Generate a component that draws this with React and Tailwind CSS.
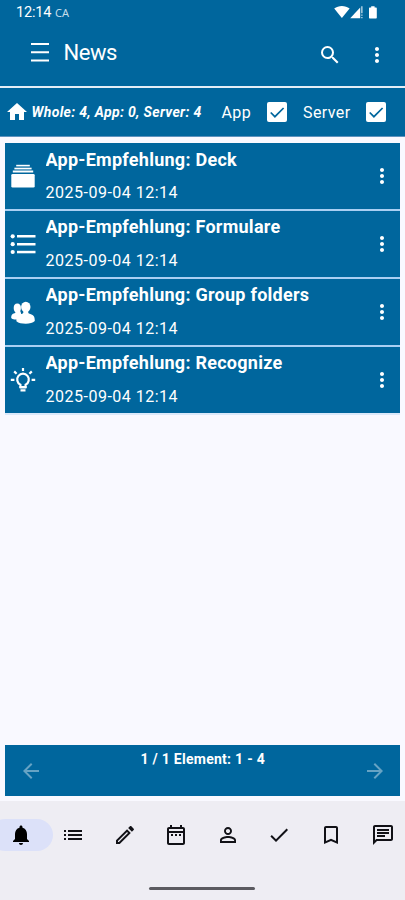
import React, { useState } from 'react';

const PATHS = {
  search: 'M15.5 14h-.79l-.28-.27A6.471 6.471 0 0 0 16 9.5 6.5 6.5 0 1 0 9.5 16c1.61 0 3.09-.59 4.23-1.57l.27.28v.79l5 4.99L20.49 19l-4.99-5zm-6 0C7.01 14 5 11.99 5 9.5S7.01 5 9.5 5 14 7.01 14 9.5 11.99 14 9.5 14z',
  more: 'M12 8c1.1 0 2-.9 2-2s-.9-2-2-2-2 .9-2 2 .9 2 2 2zm0 2c-1.1 0-2 .9-2 2s.9 2 2 2 2-.9 2-2-.9-2-2-2zm0 6c-1.1 0-2 .9-2 2s.9 2 2 2 2-.9 2-2-.9-2-2-2z',
  home: 'M10 20v-6h4v6h5v-8h3L12 3 2 12h3v8z',
  bell: 'M12 22c1.1 0 2-.9 2-2h-4c0 1.1.89 2 2 2zm6-6v-5c0-3.07-1.64-5.64-4.5-6.32V4c0-.83-.67-1.5-1.5-1.5s-1.5.67-1.5 1.5v.68C7.63 5.36 6 7.92 6 11v5l-2 2v1h16v-1l-2-2z',
  list: 'M3 13h2v-2H3v2zm0 4h2v-2H3v2zm0-8h2V7H3v2zm4 4h14v-2H7v2zm0 4h14v-2H7v2zM7 7v2h14V7H7z',
  edit: 'M14.06 9.02l.92.92L5.92 19H5v-.92l9.06-9.06M17.66 3c-.25 0-.51.1-.7.29l-1.83 1.83 3.75 3.75 1.83-1.83c.39-.39.39-1.02 0-1.41l-2.34-2.34c-.2-.2-.45-.29-.71-.29zm-3.6 3.19L3 17.25V21h3.75L17.81 9.94l-3.75-3.75z',
  calendar: 'M7 11h2v2H7v-2zm14-5v14c0 1.1-.9 2-2 2H5c-1.11 0-2-.9-2-2l.01-14c0-1.1.88-2 1.99-2h1V2h2v2h8V2h2v2h1c1.1 0 2 .9 2 2zM5 8h14V6H5v2zm14 12V10H5v10h14zm-4-7h2v-2h-2v2zm-4 0h2v-2h-2v2z',
  person: 'M12 5.9c1.16 0 2.1.94 2.1 2.1s-.94 2.1-2.1 2.1S9.9 9.16 9.9 8s.94-2.1 2.1-2.1m0 9c2.97 0 6.1 1.46 6.1 2.1v1.1H5.9V17c0-.64 3.13-2.1 6.1-2.1M12 4C9.79 4 8 5.79 8 8s1.79 4 4 4 4-1.79 4-4-1.79-4-4-4zm0 9c-2.67 0-8 1.34-8 4v3h16v-3c0-2.66-5.33-4-8-4z',
  check: 'M9 16.17L4.83 12l-1.42 1.41L9 19 21 7l-1.41-1.41z',
  bookmark: 'M17 3H7c-1.1 0-1.99.9-1.99 2L5 21l7-3 7 3V5c0-1.1-.9-2-2-2zm0 15l-5-2.18L7 18V5h10v13z',
  chat: 'M4 4h16v12H5.17L4 17.17V4m0-2c-1.1 0-1.99.9-1.99 2L2 22l4-4h14c1.1 0 2-.9 2-2V4c0-1.1-.9-2-2-2H4zm2 10h8v2H6v-2zm0-3h12v2H6V9zm0-3h12v2H6V6z',
  back: 'M20 11H7.83l5.59-5.59L12 4l-8 8 8 8 1.41-1.41L7.83 13H20v-2z',
  forward: 'M12 4l-1.41 1.41L16.17 11H4v2h12.17l-5.58 5.59L12 20l8-8z',
};

const Icon = ({ name, className = 'size-6' }) => (
  <svg viewBox="0 0 24 24" fill="currentColor" className={`shrink-0 ${className}`}>
    <path d={PATHS[name]} />
  </svg>
);

const DeckIcon = () => (
  <svg viewBox="0 0 24 24" fill="currentColor" className="size-6 shrink-0">
    <rect x="0.3" y="9.9" width="23.4" height="13.7" rx="1.3" />
    <rect x="1.8" y="6.5" width="20.4" height="2" />
    <rect x="3.4" y="3.7" width="17.2" height="1.7" />
    <rect x="5.2" y="0.8" width="13.6" height="1.6" />
  </svg>
);

const FormsIcon = () => (
  <svg viewBox="0 0 26 24" fill="currentColor" className="mr-px h-6 w-[26px] shrink-0">
    <circle cx="2.7" cy="4.3" r="2.1" />
    <circle cx="2.7" cy="12.2" r="2.1" />
    <circle cx="2.7" cy="20" r="2.1" />
    <rect x="7" y="3" width="18.5" height="2.5" />
    <rect x="7" y="11" width="18.5" height="2.5" />
    <rect x="7" y="18.8" width="18.5" height="2.5" />
  </svg>
);

const GroupIcon = () => (
  <svg viewBox="0 0 24 24" fill="currentColor" className="size-6 shrink-0">
    <ellipse cx="6.3" cy="8" rx="3.6" ry="4.5" />
    <path d="M4.300 10h4.500l1.200 3v6.500H3.500C2 19.300.8 18.800.2 18c0-3.100.8-4 3.300-4.700 1-.3 1.200-1 .8-3.300z" />
    <ellipse cx="14.800" cy="7" rx="4.700" ry="5.300" />
    <path d="M12.300 10.500h5c-.4 2 0 2.900 1.300 3.300 3.800 1.200 5.200 2.300 5.200 7.200-2 2-5.100 2.700-9 2.700-4 0-7.200-.7-9.400-2.500 0-4.800 1.400-6.100 5.600-7.400 1.300-.4 1.700-1.300 1.300-3.300z" />
  </svg>
);

const BulbIcon = () => (
  <svg viewBox="0 0 26 26" className="size-[26px] shrink-0">
    <g fill="none" stroke="currentColor" strokeWidth="2.2">
      <path d="M10.400 20v-2.300a5.800 5.800 0 1 1 5.200 0V20z" />
      <path d="M.8 12.800h3.600M21.600 12.800h3.600M13 .9v3.200M4.200 4.400l2.400 2.400M21.800 4.400l-2.400 2.400" />
    </g>
    <path d="M9.600 19h6.800v2.500h-6.800zM10.500 22.300h5v2.300h-5z" fill="currentColor" />
  </svg>
);

const NEWS = [
  { id: 1, title: 'App-Empfehlung: Deck', date: '2025-09-04 12:14', icon: DeckIcon },
  { id: 2, title: 'App-Empfehlung: Formulare', date: '2025-09-04 12:14', icon: FormsIcon },
  { id: 3, title: 'App-Empfehlung: Group folders', date: '2025-09-04 12:14', icon: GroupIcon },
  { id: 4, title: 'App-Empfehlung: Recognize', date: '2025-09-04 12:14', icon: BulbIcon },
];

const TABS = ['bell', 'list', 'edit', 'calendar', 'person', 'check', 'bookmark', 'chat'];

const StatusBar = () => (
  <div className="flex h-[25px] items-end justify-between pl-4 pr-[25px]">
    <div className="flex items-center gap-1">
      <span className="text-[14.5px] leading-6 tracking-[-0.2px]">12:14</span>
      <span className="font-['Noto_Sans',sans-serif] text-[11px] leading-[22px] text-[#c4dcea]">CA</span>
    </div>
    <svg viewBox="0 0 46 14" fill="currentColor" className="mb-1.5 h-3.5 w-[46px]">
      <path d="M.2 3.600C4.500.1 11.300.1 15.600 3.600L7.900 13z" />
      <path d="M16.200 13.200L26.200 2.600v10.600z" />
      <path d="M27.400 1.200h1v7h-1zM27.400 9.500h1v1.200h-1zM27.400 12h1v1.200h-1z" />
      <path d="M37.200 1.200h3.400v1.200h1.200c.6 0 1 .4 1 1v9c0 .6-.4 1-1 1H36c-.6 0-1-.4-1-1v-9c0-.6.4-1 1-1h1.200z" />
    </svg>
  </div>
);

const Checkbox = ({ checked, onChange, label }) => (
  <button
    role="checkbox"
    aria-checked={checked}
    aria-label={label}
    onClick={onChange}
    className="flex size-5 shrink-0 items-center justify-center rounded-[2px] bg-white text-[#00669d]"
  >
    {checked && (
      <svg viewBox="0 0 20 20" fill="none" stroke="currentColor" strokeWidth="1.7" className="size-5">
        <path d="M3.700 10.500l4.200 4.200L16.600 6" />
      </svg>
    )}
  </button>
);

const NewsRow = ({ item }) => {
  const RowIcon = item.icon;
  return (
    <div className="flex h-[67.9px] items-center border-b-2 border-[#a9cff3] bg-[#00669d] pr-1.5 last:border-[#dbe9fa]">
      <div className="flex w-9 shrink-0 items-center justify-center pt-px">
        <RowIcon />
      </div>
      <div className="h-full min-w-0 flex-1 pl-[4.5px] pt-[4.6px]">
        <div className="truncate text-[18px] font-bold leading-6 tracking-[0.26px]">{item.title}</div>
        <div className="mt-[9.8px] text-[16px] leading-6 tracking-[0.5px]">{item.date}</div>
      </div>
      <button aria-label="More" className="pt-px">
        <Icon name="more" />
      </button>
    </div>
  );
};

const App = () => {
  const [showApp, setShowApp] = useState(true);
  const [showServer, setShowServer] = useState(true);
  const [tab, setTab] = useState('bell');

  return (
    <div className="flex h-[900px] w-[405px] flex-col overflow-hidden bg-[#f9f9ff] font-[Roboto,sans-serif] text-white">
      <header className="h-[88px] shrink-0 border-b-2 border-[#e3edf6] bg-[#00669d]">
        <StatusBar />
        <div className="flex h-[60px] items-center pl-[30px] pr-4">
          <button aria-label="Menu" className="mb-[7px]">
            <svg viewBox="0 0 20 20" fill="none" stroke="currentColor" strokeWidth="2" className="size-5">
              <path d="M1 2h18M1 10.300h18M1 18.600h18" />
            </svg>
          </button>
          <h1 className="mb-1 ml-[13.5px] text-[22px] leading-7 tracking-[-0.45px]">News</h1>
          <button aria-label="Search" className="ml-auto">
            <Icon name="search" />
          </button>
          <button aria-label="More" className="ml-[23px]">
            <Icon name="more" />
          </button>
        </div>
      </header>

      <div className="flex h-[49px] shrink-0 items-center border-b border-[#5d92be] bg-[#00669d] pl-[4.5px]">
        <Icon name="home" />
        <div className="ml-[3px] w-[190px] whitespace-nowrap pt-px text-[14px] font-bold italic tracking-[0.33px]">
          Whole: 4, App: 0, Server: 4
        </div>
        <span className="w-[45.5px] pt-px text-[16px] tracking-[0.4px]">App</span>
        <Checkbox checked={showApp} onChange={() => setShowApp(!showApp)} label="App" />
        <span className="ml-4 w-[62.5px] pt-px text-[16px] tracking-[0.4px]">Server</span>
        <Checkbox checked={showServer} onChange={() => setShowServer(!showServer)} label="Server" />
      </div>

      <main className="flex-1 px-[5px] pt-1.5">
        {NEWS.map(item => <NewsRow key={item.id} item={item} />)}
      </main>

      <div className="mx-[5px] mb-[5px] flex h-[51px] shrink-0 items-center justify-between bg-[#00669d] pl-[13.5px] pr-[13px]">
        <Icon name="back" className="size-6 opacity-40" />
        <div className="self-start pt-1 text-[14px] font-bold leading-5 tracking-[0.27px]">1 / 1 Element: 1 - 4</div>
        <Icon name="forward" className="size-6 opacity-40" />
      </div>

      <nav className="flex h-[99px] shrink-0 flex-col items-center justify-between bg-[#eeedf3] pb-[10px] pr-px pt-[18px] text-[#111116]">
        <div className="flex w-[413px] shrink-0">
          {TABS.map(name => (
            <button key={name} onClick={() => setTab(name)} className="flex h-8 min-w-0 flex-1 items-center justify-center">
              <span className={`flex h-8 w-16 shrink-0 items-center justify-center rounded-full ${tab === name ? 'bg-[#dce1f9] text-black' : ''}`}>
                <Icon name={name} />
              </span>
            </button>
          ))}
        </div>
        <div className="h-[3px] w-[106px] rounded-full bg-[#5b5a60]" />
      </nav>
    </div>
  );
};

export default App;
